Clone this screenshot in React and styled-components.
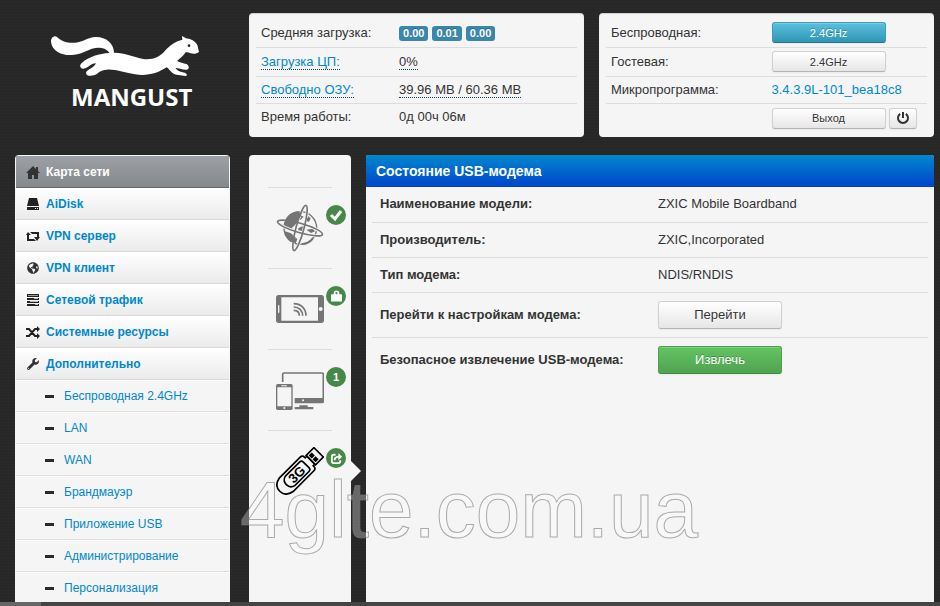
import React from 'react';
import styled, { createGlobalStyle } from 'styled-components';
import { FaWrench, FaGlobeAmericas } from 'react-icons/fa';

const GlobalStyle = createGlobalStyle`
  * {
    box-sizing: border-box;
  }
  body {
    margin: 0;
    background: #262626;
    color: #333;
    font-family: 'Liberation Sans', Arial, sans-serif;
    font-size: 13px;
    line-height: 20px;
  }
  a {
    color: #0088cc;
    text-decoration: none;
  }
`;

/* ----- sidebar icons ----- */

const HomeIcon = () => (
  <svg width='14' height='14' viewBox='0 0 14 14' fill='#333'>
    <path d='M7 1L0 8h2v6h4v-4h2v4h4V8h2l-2-2V2h-2v2z' />
  </svg>
);

const DiskIcon = () => (
  <svg width='14' height='14' viewBox='0 0 14 14' fill='#222'>
    <path d='M3 1h8l2 8H1z' />
    <path d='M1 10h12v3H1z' />
    <path d='M9 11h1v1H9zM11 11h1v1h-1z' fill='#eee' />
  </svg>
);

const RetweetIcon = () => (
  <svg width='14' height='14' viewBox='0 0 14 14' fill='#222'>
    <path d='M2 3l3 3H3v4h5l2 2H1V6H0z' />
    <path d='M4 3h9v5h1l-3 4-3-4h3V5H6z' />
  </svg>
);

const TasksIcon = () => (
  <svg width='14' height='14' viewBox='0 0 14 14' fill='#222'>
    <path d='M1 1h12v3H1zM1 5h12v2H1zM1 8h12v2H1zM1 11h12v2H1z' />
    <path d='M2 2h10v1H2z' fill='#999' />
    <path d='M8 5h4v1H8zM4 8h8v1H4zM9 11h3v1H9z' fill='#bbb' />
  </svg>
);

const RandomIcon = () => (
  <svg width='14' height='14' viewBox='0 0 14 14' fill='none' stroke='#222' strokeWidth='2'>
    <path d='M0 4h3l6 7h3M0 11h3l6-7h3' />
    <path d='M11 1l3 3-3 3zM11 8l3 3-3 3z' fill='#222' stroke='none' />
  </svg>
);

const PowerIcon = () => (
  <svg width='14' height='14' viewBox='0 0 14 14' fill='none' stroke='#333' strokeWidth='2'>
    <path d='M4.2 2.8a5 5 0 1 0 5.6 0M7 1v6' />
  </svg>
);

/* ----- network map icons ----- */

const InternetIcon = () => (
  <svg width='48' height='48' viewBox='93 162 144 144' fill='none' stroke='#757575'>
    <circle cx='166' cy='234' r='49' strokeWidth='4' />
    <path
      d='M118 221c4-17 17-32 34-36l18 2-2 9 8 4-10 10-7-3-7 8 3 7-12 7-2 7-15-1-9-6zM118 243l18 6 13 9 8 10-5 12c-20-3-31-18-34-37zM160 234l13-5 5 6-6 8-12-2zM181 203l8-5 8 7-6 8-8-3zM184 239l20-3 6 8-12 5zM170 279c12 1 23-5 33-17l3 5c-9 12-21 18-35 18z'
      fill='#757575'
      stroke='none'
    />
    <ellipse cx='165' cy='234' rx='69' ry='14' strokeWidth='9' stroke='#f5f5f5' transform='rotate(16 165 234)' />
    <ellipse cx='165' cy='234' rx='69' ry='12' strokeWidth='9' stroke='#f5f5f5' transform='rotate(105 165 234)' />
    <path
      d='M118 219c3-16 15-30 34-34l17 3-1 9-9 12-6 12-9 10c-8-1-18-5-26-12zM119 245l17 6 13 9 4 19c-20-3-31-17-34-34zM187 203l9 4-4 8-7-1z'
      fill='#757575'
      stroke='none'
    />
    <ellipse cx='165' cy='234' rx='70' ry='14' strokeWidth='5' transform='rotate(16 165 234)' />
    <ellipse cx='165' cy='234' rx='70' ry='12' strokeWidth='5' transform='rotate(105 165 234)' />
  </svg>
);

const WirelessIcon = () => (
  <svg width='48' height='48' viewBox='93 30 144 144'>
    <rect x='93' y='60' width='144' height='84' rx='8' fill='#757575' />
    <path d='M109 67h110v70H109z' fill='#f5f5f5' />
    <rect x='99' y='90' width='4' height='24' rx='2' fill='#f5f5f5' />
    <circle cx='227' cy='102' r='6' fill='#f5f5f5' />
    <path
      d='M146 86c21 0 37 14 37 36M146 96c15 0 27 10 27 26M146 106c10 0 17 6 17 16'
      fill='none'
      stroke='#757575'
      strokeWidth='5'
    />
  </svg>
);

const ClientsIcon = () => (
  <svg width='48' height='48' viewBox='93 273 144 144' fill='#757575'>
    <path d='M113 321v-23q0-4 4-4h114q4 0 4 4v75' fill='none' stroke='#757575' strokeWidth='5' />
    <path d='M149 369h88v11q0 5-5 5h-83zM163 391h25v5h17v7h-56v-7h14z' />
    <rect x='93' y='327' width='50' height='78' rx='5' />
    <path d='M97 337h42v57H97zM109 331h17v3h-17z' fill='#f5f5f5' />
    <circle cx='118' cy='399' r='3' fill='#f5f5f5' />
    <circle cx='174' cy='376' r='3' fill='#f5f5f5' />
  </svg>
);

const ModemIcon = () => (
  <svg width='48' height='48' viewBox='123 66 144 144' fill='none' stroke='#000' strokeWidth='5'>
    <g transform='translate(195 138) rotate(-45)'>
      <path d='M-58-29H30q9 0 9 9v3h7v34h-7v3q0 9-9 9h-88q-28-5-28-29t28-29z' />
      <path d='M-42-20H18q8 0 8 8v24q0 8-8 8h-60q-16-4-16-20t16-20z' />
      <path d='M46-20h33v40H46z' />
      <path d='M54-12h8v8h-8zM54 4h8v8h-8z' fill='#000' />
      <text x='-14' y='14' textAnchor='middle' fontSize='40' fontWeight='700' fill='#000' stroke='none'>
        3G
      </text>
    </g>
  </svg>
);

const CheckMark = () => (
  <svg width='14' height='14' viewBox='0 0 14 14' fill='none' stroke='#fff' strokeWidth='3'>
    <path d='M2 7l4 4 6-8' />
  </svg>
);

const LockMark = () => (
  <svg width='11' height='14' viewBox='0 0 12 14' fill='#fff'>
    <path d='M1 5h2V3q0-2 3-2t3 2v2h2q1 0 1 1v7H0V6q0-1 1-1zM5 3v2h2V3z' />
  </svg>
);

const ShareMark = () => (
  <svg width='13' height='13' viewBox='0 0 14 14' fill='none' stroke='#fff' strokeWidth='2'>
    <path d='M6 3H4Q2 3 2 5v5q0 2 2 2h5q2 0 2-2V9' />
    <path d='M5 9q0-4 5-4' />
    <path d='M9 1l4 4-4 4z' fill='#fff' stroke='none' />
  </svg>
);

const LogoDrawing = () => (
  <svg width='180' height='64' viewBox='0 0 540 192' fill='#fff' role='img' aria-label='Mangust'>
    <path d='M50 50C62 63 82 70 106 68C130 66 142 52 167 51C197 50 222 70 222 98C250 97 282 111 310 117C340 120 360 110 375 92C390 76 407 63 427 59L426 48L438 55C455 57 466 64 472 75L477 96C470 101 462 103 452 100C447 98 441 96 437 97C430 108 420 116 411 123C420 128 430 130 439 132C447 135 450 148 440 149C428 150 416 144 406 144C413 153 421 156 434 158C443 161 442 168 436 168L410 164C394 162 389 147 380 142C350 162 320 168 285 163C250 158 226 147 201 149C180 150 174 161 162 166C152 169 138 168 138 159C139 150 161 145 168 130C150 130 143 147 129 146C119 144 118 134 126 128C147 110 177 101 208 99C204 90 193 84 178 83C148 82 131 103 96 105C66 107 35 93 33 65C32 52 44 45 50 50Z' />
    <circle cx='447' cy='77' r='4' fill='#222' />
  </svg>
);

/* ----- data ----- */

const menu = [
  { label: 'Карта сети', icon: <HomeIcon />, active: true },
  { label: 'AiDisk', icon: <DiskIcon /> },
  { label: 'VPN сервер', icon: <RetweetIcon /> },
  { label: 'VPN клиент', icon: <FaGlobeAmericas size={12} /> },
  { label: 'Сетевой трафик', icon: <TasksIcon /> },
  { label: 'Системные ресурсы', icon: <RandomIcon /> },
  { label: 'Дополнительно', icon: <FaWrench size={12} /> },
];

const submenu = [
  'Беспроводная 2.4GHz',
  'LAN',
  'WAN',
  'Брандмауэр',
  'Приложение USB',
  'Администрирование',
  'Персонализация',
];

const devices = [
  { name: 'Интернет', icon: <InternetIcon />, mark: <CheckMark /> },
  { name: 'Беспроводная сеть', icon: <WirelessIcon />, mark: <LockMark /> },
  { name: 'Клиенты', icon: <ClientsIcon />, mark: '1' },
  { name: 'USB-модем', icon: <ModemIcon />, mark: <ShareMark />, active: true },
];

const App = () => {
  return (
    <Page>
      <GlobalStyle />
      <Header>
        <Logo href='#home'>
          <LogoDrawing />
          <LogoName>MANGUST</LogoName>
        </Logo>
        <Panel>
          <InfoTable $label='43%'>
            <tbody>
              <tr>
                <th scope='row'>Средняя загрузка:</th>
                <td>
                  <Loads>
                    <Load>0.00</Load>
                    <Load>0.01</Load>
                    <Load>0.00</Load>
                  </Loads>
                </td>
              </tr>
              <tr>
                <th scope='row'>
                  <Dotted as='a' href='#cpu'>Загрузка ЦП:</Dotted>
                </th>
                <td>
                  <Dotted>0%</Dotted>
                </td>
              </tr>
              <tr>
                <th scope='row'>
                  <Dotted as='a' href='#mem'>Свободно ОЗУ:</Dotted>
                </th>
                <td>
                  <Dotted>39.96 MB / 60.36 MB</Dotted>
                </td>
              </tr>
              <tr>
                <th scope='row'>Время работы:</th>
                <td>0д 00ч 06м</td>
              </tr>
            </tbody>
          </InfoTable>
        </Panel>
        <Panel>
          <InfoTable $label='50%'>
            <tbody>
              <tr>
                <th scope='row'>Беспроводная:</th>
                <td>
                  <MiniButton $kind='info'>2.4GHz</MiniButton>
                </td>
              </tr>
              <tr>
                <th scope='row'>Гостевая:</th>
                <td>
                  <MiniButton>2.4GHz</MiniButton>
                </td>
              </tr>
              <tr>
                <th scope='row'>Микропрограмма:</th>
                <td>
                  <a href='#firmware'>3.4.3.9L-101_bea18c8</a>
                </td>
              </tr>
              <tr>
                <td />
                <td>
                  <Actions>
                    <MiniButton>Выход</MiniButton>
                    <PowerButton aria-label='Перезагрузка'>
                      <PowerIcon />
                    </PowerButton>
                  </Actions>
                </td>
              </tr>
            </tbody>
          </InfoTable>
        </Panel>
      </Header>

      <Content>
        <Sidebar>
          <ul>
            {menu.map((item) => (
              <li key={item.label}>
                <MenuLink href='#menu' $active={item.active}>
                  <IconBox>{item.icon}</IconBox>
                  {item.label}
                </MenuLink>
              </li>
            ))}
            {submenu.map((label) => (
              <li key={label}>
                <SubLink href='#submenu'>{label}</SubLink>
              </li>
            ))}
          </ul>
        </Sidebar>
        <Devices>
          {devices.map((device) => (
            <Device key={device.name} href='#device' aria-label={device.name} $active={device.active}>
              <DeviceIcon>
                {device.icon}
                <Mark>{device.mark}</Mark>
              </DeviceIcon>
            </Device>
          ))}
        </Devices>
        <Main>
          <Title>Состояние USB-модема</Title>
          <StatusTable>
            <tbody>
              <tr>
                <th scope='row'>Наименование модели:</th>
                <td>ZXIC Mobile Boardband</td>
              </tr>
              <tr>
                <th scope='row'>Производитель:</th>
                <td>ZXIC,Incorporated</td>
              </tr>
              <tr>
                <th scope='row'>Тип модема:</th>
                <td>NDIS/RNDIS</td>
              </tr>
              <tr>
                <th scope='row'>Перейти к настройкам модема:</th>
                <td>
                  <Button>Перейти</Button>
                </td>
              </tr>
              <tr>
                <th scope='row'>Безопасное извлечение USB-модема:</th>
                <td>
                  <Button $kind='success'>Извлечь</Button>
                </td>
              </tr>
            </tbody>
          </StatusTable>
        </Main>
        <Watermark>4glte.com.ua</Watermark>
      </Content>
      <StatusBar />
    </Page>
  );
};

const fills = {
  plain: `
    color: #333;
    background: linear-gradient(#ffffff, #e6e6e6);
    border-color: #d0d0d0 #d0d0d0 #b3b3b3;
    text-shadow: 0 1px 1px rgba(255, 255, 255, 0.75);
  `,
  info: `
    color: #fff;
    background: linear-gradient(#5bc0de, #2f96b4);
    border-color: #3f9db9 #3f9db9 #24748c;
    text-shadow: 0 -1px 0 rgba(0, 0, 0, 0.25);
  `,
  success: `
    color: #fff;
    background: linear-gradient(#62c462, #51a351);
    border-color: #4f9f4f #4f9f4f #3f8a3f;
    text-shadow: 0 -1px 0 rgba(0, 0, 0, 0.25);
  `,
};

const Page = styled.div`
  display: flex;
  flex-direction: column;
  height: 100vh;
  overflow: hidden;
  background:
    repeating-linear-gradient(0deg, rgba(255, 255, 255, 0.01) 0 1px, transparent 1px 3px),
    #272727;
`;

const Header = styled.header`
  display: grid;
  grid-template-columns: 219px 1fr 1fr;
  gap: 15px;
  padding: 13px 6px 0 15px;
`;

const Logo = styled.a`
  display: flex;
  flex-direction: column;
  padding: 7px 0 0 25px;
`;

const LogoName = styled.span`
  padding-left: 31px;
  color: #fff;
  font-family: 'Open Sans', sans-serif;
  font-size: 24px;
  font-weight: 700;
  line-height: 26px;
`;

const Panel = styled.section`
  padding: 6px 7px;
  border-radius: 4px;
  background: #f5f5f5;
  box-shadow: inset 0 1px 1px rgba(0, 0, 0, 0.15);
`;

const InfoTable = styled.table`
  width: 100%;
  border-collapse: collapse;
  table-layout: fixed;

  tr {
    height: 28px;
  }
  tr:nth-child(2) {
    height: 29px;
  }
  tr:nth-child(3) {
    height: 27px;
  }
  tr + tr {
    border-top: 1px solid #ddd;
  }
  th,
  td {
    padding: 0 0 0 5px;
    font-weight: 400;
    text-align: left;
    vertical-align: middle;
  }
  th {
    width: ${(props) => props.$label};
  }
`;

const Loads = styled.div`
  display: flex;
  gap: 4px;
  padding-top: 2px;
`;

const Load = styled.span`
  padding: 0 4px;
  border-radius: 3px;
  background: #3a87ad;
  color: #fff;
  font-size: 11px;
  font-weight: 700;
  line-height: 15px;
  text-shadow: 0 -1px 0 rgba(0, 0, 0, 0.25);
`;

const Dotted = styled.span`
  border-bottom: 1px dotted #07455f;
`;

const Actions = styled.div`
  display: flex;
  gap: 3px;
  padding-top: 2px;
`;

const MiniButton = styled.button`
  display: block;
  width: 114px;
  height: 21px;
  padding: 0;
  border: 1px solid;
  border-radius: 3px;
  font-family: inherit;
  font-size: 11px;
  line-height: 18px;
  box-shadow: inset 0 1px 0 rgba(255, 255, 255, 0.2), 0 1px 2px rgba(0, 0, 0, 0.05);
  ${(props) => fills[props.$kind || 'plain']}
`;

const PowerButton = styled(MiniButton)`
  display: flex;
  justify-content: center;
  align-items: center;
  width: 28px;
`;

const Content = styled.div`
  position: relative;
  flex: 1;
  display: flex;
  min-height: 0;
  padding: 18px 6px 0 15px;
  overflow: hidden;
`;

const Sidebar = styled.nav`
  flex: 0 0 215px;
  margin-right: 19px;
  padding: 1px;
  border-radius: 4px 4px 0 0;
  background: #f5f5f5;
  font-size: 12px;
  overflow: hidden;

  ul {
    margin: 0;
    padding: 0;
    list-style-type: none;
  }
`;

const MenuLink = styled.a`
  display: flex;
  align-items: center;
  height: 32px;
  padding-left: 10px;
  border-bottom: 1px solid ${(props) => (props.$active ? '#66696c' : '#d9d9d9')};
  background: ${(props) =>
    props.$active ? 'linear-gradient(#9da0a5, #85898c)' : 'linear-gradient(#ffffff, #ebebeb)'};
  color: ${(props) => (props.$active ? '#fff' : '#0088cc')};
  font-weight: 700;
`;

const IconBox = styled.span`
  display: flex;
  justify-content: center;
  width: 14px;
  margin-right: 6px;
  color: #333;
`;

const SubLink = styled.a`
  display: flex;
  align-items: center;
  height: 32px;
  padding-left: 29px;
  border-top: 1px solid #fff;
  border-bottom: 1px solid #ddd;

  &::before {
    content: '';
    width: 9px;
    height: 3px;
    margin-right: 10px;
    background: #2a2a2a;
  }
`;

const Devices = styled.nav`
  flex: 0 0 102px;
  margin-right: 15px;
  padding-top: 32px;
  border-radius: 4px 4px 0 0;
  background: #f5f5f5;
`;

const Device = styled.a`
  position: relative;
  display: block;
  height: 81px;

  &::before {
    content: '';
    display: block;
    height: 1px;
    margin: 0 19px;
    background: #ddd;
  }

  &::after {
    content: '';
    display: ${(props) => (props.$active ? 'block' : 'none')};
    position: absolute;
    top: 31px;
    left: 100%;
    border: 10px solid transparent;
    border-left-color: #f5f5f5;
    border-right: 0;
  }
`;

const DeviceIcon = styled.span`
  position: relative;
  display: block;
  width: 48px;
  margin: 16px auto 0;
`;

const Mark = styled.span`
  position: absolute;
  top: 1px;
  left: 50px;
  display: flex;
  justify-content: center;
  align-items: center;
  width: 20px;
  height: 20px;
  border-radius: 10px;
  background: #468847;
  color: #fff;
  font-size: 11px;
  font-weight: 700;
`;

const Main = styled.main`
  flex: 1;
  border-radius: 3px 3px 0 0;
  background: #f5f5f5;
  overflow: hidden;
`;

const Title = styled.h1`
  margin: 0;
  padding: 6px 10px;
  background: linear-gradient(#0088cc, #0044cc);
  color: #fff;
  font-size: 14px;
  font-weight: 700;
  line-height: 20px;
`;

const StatusTable = styled.table`
  width: calc(100% - 12px);
  margin: 0 6px;
  border-collapse: collapse;
  table-layout: fixed;

  tr + tr {
    border-top: 1px solid #ddd;
  }
  th,
  td {
    width: 50%;
    height: 35px;
    padding: 0 8px;
    text-align: left;
  }
  tr:nth-child(n + 4) > * {
    height: 45px;
  }
`;

const Button = styled.button`
  display: block;
  width: 124px;
  height: 28px;
  padding: 0;
  border: 1px solid;
  border-radius: 3px;
  font-family: inherit;
  font-size: 13px;
  box-shadow: inset 0 1px 0 rgba(255, 255, 255, 0.2), 0 1px 2px rgba(0, 0, 0, 0.05);
  ${(props) => fills[props.$kind || 'plain']}
`;

/* lies over the panels */
const Watermark = styled.div`
  position: absolute;
  bottom: 46px;
  left: 240px;
  color: rgba(255, 255, 255, 0.3);
  font-size: 80px;
  line-height: 92px;
  -webkit-text-stroke: 1px rgba(120, 120, 120, 0.6);
  pointer-events: none;
`;

const StatusBar = styled.footer`
  height: 4px;
  background: linear-gradient(90deg, #666 0 41px, #444 41px);
`;

export default App;
